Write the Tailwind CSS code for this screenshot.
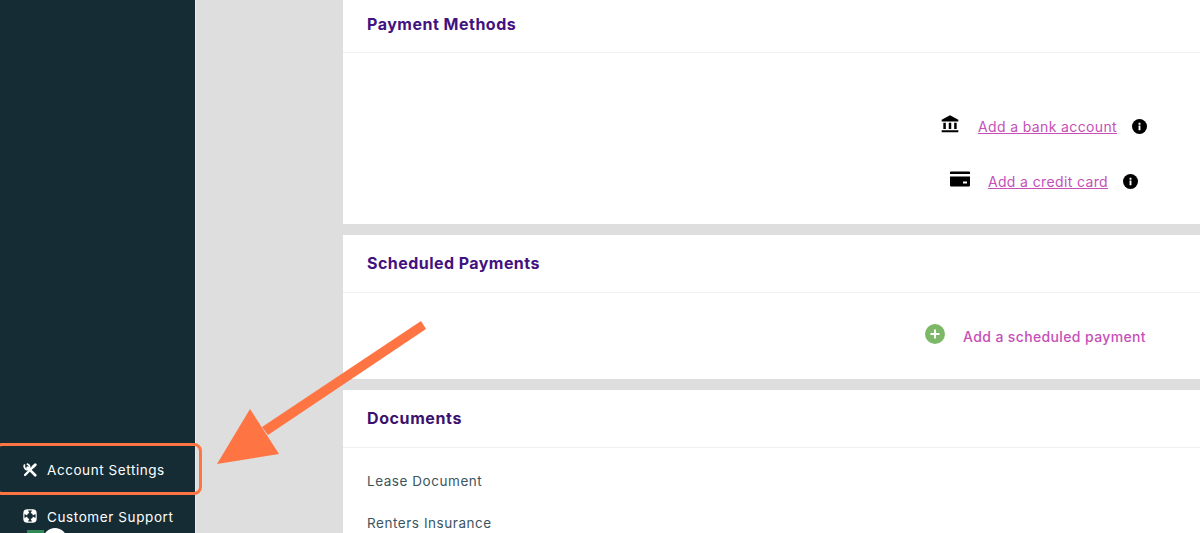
<!DOCTYPE html>
<html lang="en">
<head>
  <meta charset="UTF-8" />
  <title>Account Settings</title>
  <script src="https://cdn.jsdelivr.net/npm/@tailwindcss/browser@4"></script>
</head>
<body class="bg-[#dedede]">
  <div class="relative flex h-[533px] w-[1200px] overflow-hidden font-['Inter',sans-serif]">

    <!-- Sidebar -->
    <aside class="flex w-[196px] shrink-0 flex-col justify-end bg-[#152c35] text-white border-r border-[#e9e9e9]">
      <div class="flex h-[46px] items-center gap-[10px] pl-[23px] text-[13.5px] tracking-[0.57px]">
        <svg class="h-[14px] w-[14px]" viewBox="0 0 24 24" fill="none" stroke="#fff" stroke-linecap="round">
          <path d="M8 8l13 13" stroke-width="4.500"/>
          <path d="M2.500 3.500a6 6 0 0 0 8 7.500M10.500 11a6 6 0 0 0-3-9" stroke-width="3"/>
          <path d="M3.500 20.500L18 6" stroke-width="4"/>
          <path d="M17.500 6.500L21 3" stroke-width="5"/>
        </svg>
        <span>Account Settings</span>
      </div>
      <div class="relative flex h-[40px] items-start gap-[10px] pl-[23px] pt-[14px] text-[13.5px] tracking-[0.6px]">
        <svg class="mt-[2px] h-[14px] w-[14px]" viewBox="0 0 24 24">
          <rect x="0.500" y="0.500" width="23" height="23" rx="7" fill="#fff"/>
          <circle cx="12" cy="12" r="5" fill="#152c35"/>
          <path d="M8.500 2.500h7L12 9zM8.500 21.500h7L12 15zM2.500 8.500v7L9 12zM21.500 8.500v7L15 12z" fill="#152c35"/>
        </svg>
        <span>Customer Support</span>
        <span class="absolute bottom-0 left-[27px] h-[3px] w-[17px] bg-[#2f8a57]"></span>
        <span class="absolute -bottom-[19px] left-[43px] h-[24px] w-[24px] rounded-full bg-white"></span>
      </div>
    </aside>

    <!-- Main -->
    <main class="ml-[147px] flex flex-1 flex-col gap-[11px]">
      <section class="h-[224px] shrink-0 bg-white">
        <h2 class="flex h-[53px] items-center border-b border-[#f0f0f0] pb-[4px] pl-[24px] text-[16px] font-bold tracking-[0.5px] text-[#42127f]">Payment Methods</h2>
        <div class="flex flex-col items-end pt-[63px] text-[14px] tracking-[0.37px] text-[#c64fb8]">
          <div class="flex items-center pr-[53px]">
            <svg class="mr-[18px] -mt-[6px] h-[20px] w-[20px]" viewBox="0 0 24 24" fill="#000"><path d="M12 1.500L2 7v2h20V7zM4 10.500h3v7.500H4zM10.500 10.500h3v7.500h-3zM17 10.500h3v7.500h-3zM2 19.500h20V22H2z"/></svg>
            <a class="underline">Add a bank account</a>
            <svg class="ml-[15px] -mt-[1px] h-[15px] w-[15px]" viewBox="0 0 24 24"><circle cx="12" cy="12" r="12" fill="#000"/><path d="M10.500 10.500h3V18h-3zM10.500 6h3v3h-3z" fill="#fff"/></svg>
          </div>
          <div class="mt-[34px] flex items-center pr-[62px]">
            <svg class="mr-[18px] -mt-[6px] h-[20px] w-[20px]" viewBox="0 0 20 20" fill="#000"><path d="M0 3.500a1 1 0 0 1 1-1h18a1 1 0 0 1 1 1V5H0zM0 7.500h20v9a1 1 0 0 1-1 1H1a1 1 0 0 1-1-1zM13 12.500v2h4v-2z" fill-rule="evenodd"/></svg>
            <a class="underline">Add a credit card</a>
            <svg class="ml-[15px] -mt-[1px] h-[15px] w-[15px]" viewBox="0 0 24 24"><circle cx="12" cy="12" r="12" fill="#000"/><path d="M10.500 10.500h3V18h-3zM10.500 6h3v3h-3z" fill="#fff"/></svg>
          </div>
        </div>
      </section>

      <section class="h-[144px] shrink-0 bg-white">
        <h2 class="flex h-[58px] items-center border-b border-[#f0f0f0] pb-[2px] pl-[24px] text-[16px] font-bold tracking-[0.45px] text-[#42127f]">Scheduled Payments</h2>
        <div class="flex items-center justify-end pr-[54px] pt-[33px] text-[14px] font-medium tracking-[0.37px] text-[#c64fb8]">
          <svg class="mr-[18px] -mt-[5px] h-[20px] w-[20px]" viewBox="0 0 20 20"><circle cx="10" cy="10" r="10" fill="#7db868"/><path d="M9 5.500h2V9h3.500v2H11v3.500H9V11H5.500V9H9z" fill="#fff"/></svg>
          <a>Add a scheduled payment</a>
        </div>
      </section>

      <section class="flex-1 bg-white">
        <h2 class="flex h-[58px] items-center border-b border-[#f0f0f0] pb-[2px] pl-[24px] text-[16px] font-bold tracking-[0.6px] text-[#3b1170]">Documents</h2>
        <ul class="flex flex-col gap-[24px] pl-[24px] pt-[24px] text-[13.5px] leading-[18px] tracking-[0.55px] text-[#3a5560]">
          <li>Lease Document</li>
          <li>Renters Insurance</li>
        </ul>
      </section>
    </main>

    <!-- Annotation over the page -->
    <div class="absolute left-[-6px] top-[443px] h-[52px] w-[208px] rounded-[8px] border-[3px] border-[#ff7443]"></div>
    <svg class="absolute left-0 top-0 h-[533px] w-[1200px]" viewBox="0 0 1200 533" fill="#ff7443"><path d="M421 321l5 8-158 106-6-8z"/><path d="M250 409l29 45-62 10z"/></svg>
  </div>
</body>
</html>
